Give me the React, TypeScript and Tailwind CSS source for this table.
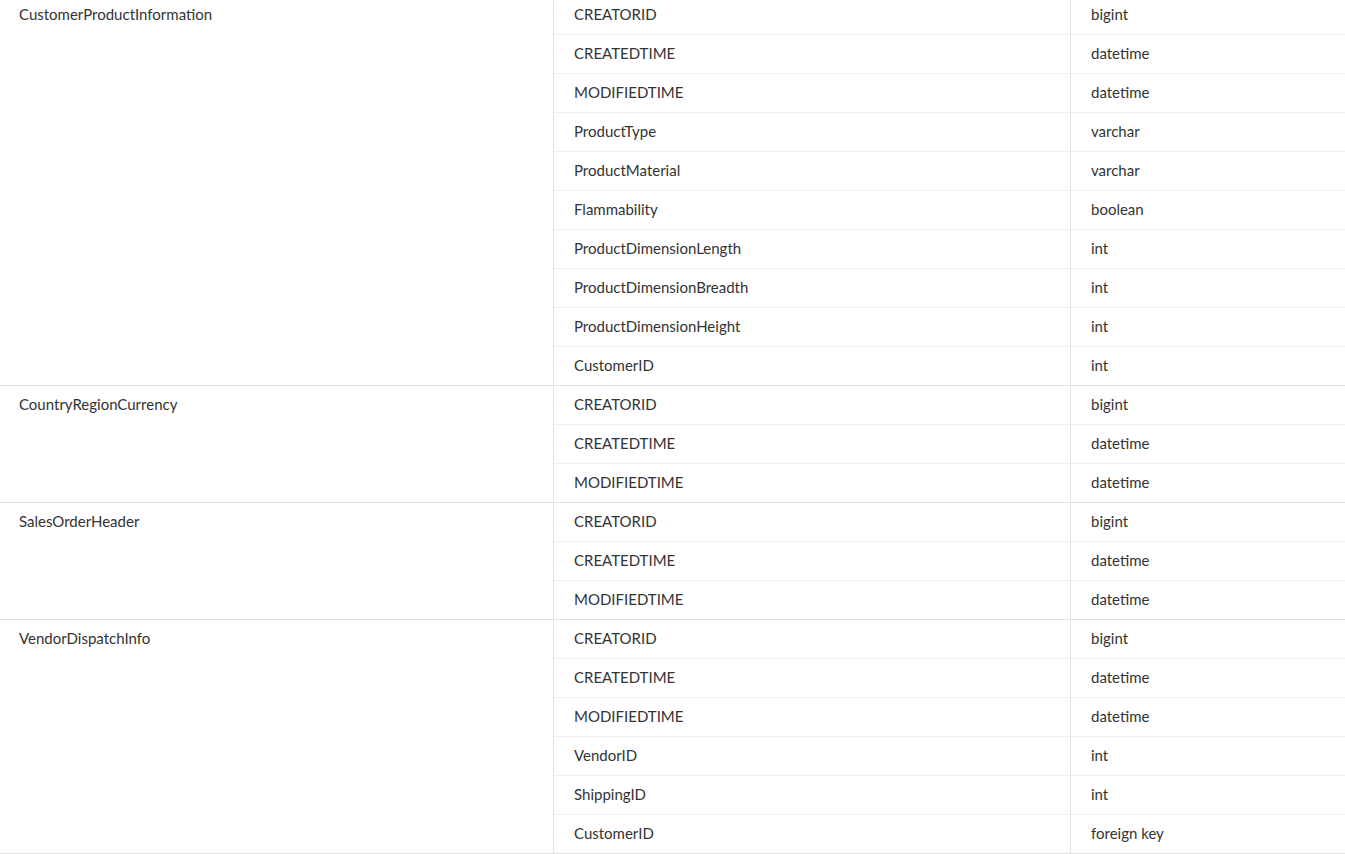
import React from 'react';

type Field = { name: string; type: string };
type Group = { table: string; fields: Field[] };

const audit: Field[] = [
  { name: 'CREATORID', type: 'bigint' },
  { name: 'CREATEDTIME', type: 'datetime' },
  { name: 'MODIFIEDTIME', type: 'datetime' },
];

const groups: Group[] = [
  {
    table: 'CustomerProductInformation',
    fields: [
      ...audit,
      { name: 'ProductType', type: 'varchar' },
      { name: 'ProductMaterial', type: 'varchar' },
      { name: 'Flammability', type: 'boolean' },
      { name: 'ProductDimensionLength', type: 'int' },
      { name: 'ProductDimensionBreadth', type: 'int' },
      { name: 'ProductDimensionHeight', type: 'int' },
      { name: 'CustomerID', type: 'int' },
    ],
  },
  { table: 'CountryRegionCurrency', fields: audit },
  { table: 'SalesOrderHeader', fields: audit },
  {
    table: 'VendorDispatchInfo',
    fields: [
      ...audit,
      { name: 'VendorID', type: 'int' },
      { name: 'ShippingID', type: 'int' },
      { name: 'CustomerID', type: 'foreign key' },
    ],
  },
];

const App: React.FC = () => {
  return (
    <div className="min-h-screen bg-white overflow-hidden font-['Lato','Open_Sans',sans-serif] text-[15px] text-[#333]">
      <div className="-mt-[4px]">
        {groups.map((group) => (
          <div key={group.table} className="flex border-b border-[#e0e0e0]">
            <div className="w-[554px] shrink-0 border-r border-[#e3e3e3] pl-[19px] pt-[7px]">
              {group.table}
            </div>
            <div className="flex-1">
              {group.fields.map((field, idx) => {
                const last = idx === group.fields.length - 1;
                return (
                  <div
                    key={field.name + idx}
                    className={`flex items-center ${
                      last ? 'h-[38px]' : 'h-[39px] border-b border-[#f0f0f0]'
                    }`}
                  >
                    <div className="w-[517px] shrink-0 h-full flex items-center border-r border-[#e3e3e3] pl-[20px] pb-px">
                      {field.name}
                    </div>
                    <div className="flex-1 pl-[20px] pb-px">{field.type}</div>
                  </div>
                );
              })}
            </div>
          </div>
        ))}
      </div>
    </div>
  );
};

export default App;
